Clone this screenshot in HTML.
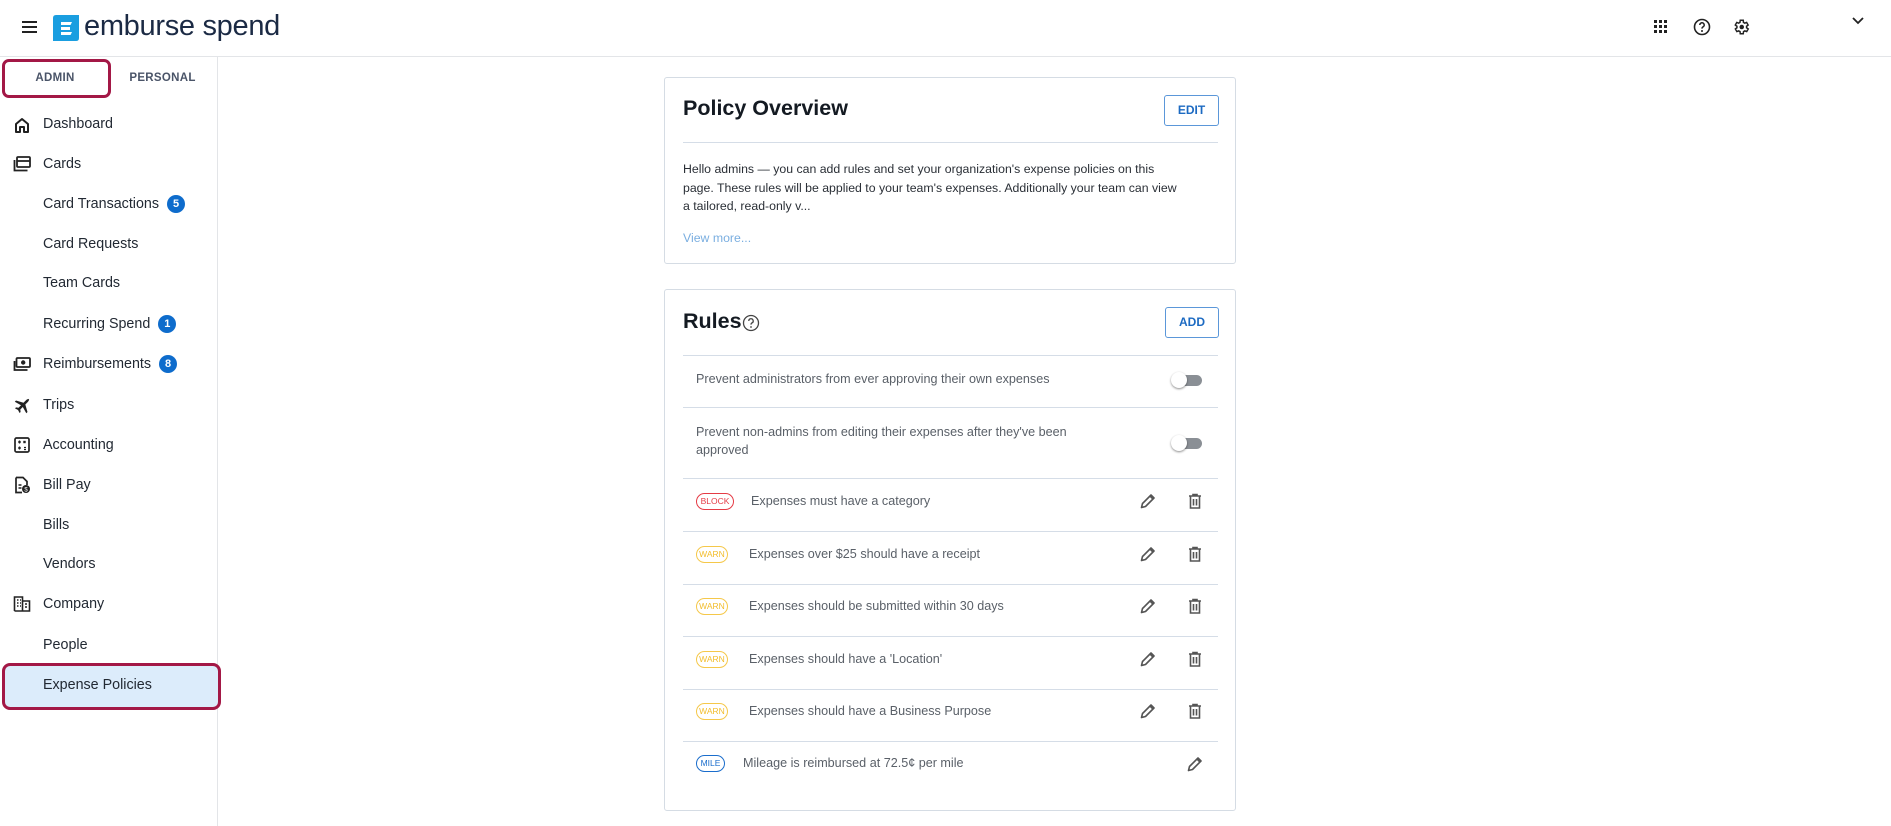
<!DOCTYPE html>
<html><head><meta charset="utf-8"><style>
*{box-sizing:border-box;margin:0;padding:0}
body{width:1891px;height:826px;background:#fff;font-family:"Liberation Sans",sans-serif;position:relative;overflow:hidden;color:#1f2430}
.a{position:absolute}
.hdr{left:0;top:0;width:1891px;height:57px;border-bottom:1px solid #e3e5e8}
.side{left:217px;top:57px;width:1px;height:769px;background:#e3e5e8}
.nav{position:absolute;left:43px;font-size:14.3px;color:#222933;line-height:20px}
.ic{position:absolute;left:13px;width:18px;height:18px}
.badge{display:inline-block;width:18px;height:18px;border-radius:50%;background:#0e6ccc;color:#fff;font-size:11px;font-weight:bold;text-align:center;line-height:18px;margin-left:8px;vertical-align:1px}
.card{position:absolute;left:664px;width:572px;border:1px solid #d5dce4;border-radius:3px;background:#fff}
.btn{position:absolute;border:1px solid #5b97d9;border-radius:3px;color:#1c6ac2;font-size:12px;font-weight:bold;text-align:center;line-height:28px}
.hr{position:absolute;left:18px;width:535px;height:1px;background:#d5dde7}
.rt{position:absolute;font-size:12.6px;color:#5a6068}
.tag{position:absolute;left:31px;height:17px;border:1px solid;border-radius:9px;font-size:8.5px;text-align:center;line-height:15px}
.tog{position:absolute;left:506px;width:32px;height:14px}
.tog:before{content:"";position:absolute;left:4px;top:2px;width:27px;height:11px;border-radius:6px;background:#8a8f95}
.tog:after{content:"";position:absolute;left:0;top:-1px;width:16px;height:16px;border-radius:50%;background:#fff;box-shadow:0 1px 2px rgba(0,0,0,.45)}
</style></head><body>
<div class="a hdr"></div>
<svg class="a" style="left:22px;top:20px" width="16" height="14" viewBox="0 0 16 14"><rect y="1" width="15" height="2" fill="#222"/><rect y="6" width="15" height="2" fill="#222"/><rect y="11" width="15" height="2" fill="#222"/></svg>
<svg class="a" style="left:53px;top:15px" width="26" height="26" viewBox="0 0 26 26"><path d="M3 0H26V23Q26 26 23 26H0V3Q0 0 3 0Z" fill="#1a9ee0"/><path d="M8 7H19L17.5 10H8ZM8 12H17V15H8ZM8 17H19L17.5 20H8Z" fill="#fff"/></svg>
<div class="a" style="left:84px;top:8px;font-size:29px;color:#1b2a44;letter-spacing:-0.3px;line-height:36px">emburse spend</div>
<svg class="a" style="left:1654px;top:20px" width="14" height="14" viewBox="0 0 14 14" fill="#222"><rect x="0" y="0" width="3" height="3"/><rect x="5" y="0" width="3" height="3"/><rect x="10" y="0" width="3" height="3"/><rect x="0" y="5" width="3" height="3"/><rect x="5" y="5" width="3" height="3"/><rect x="10" y="5" width="3" height="3"/><rect x="0" y="10" width="3" height="3"/><rect x="5" y="10" width="3" height="3"/><rect x="10" y="10" width="3" height="3"/></svg>
<svg class="a" style="left:1693px;top:18px" width="18" height="18" viewBox="0 0 18 18"><circle cx="9" cy="9" r="7.5" fill="none" stroke="#222" stroke-width="1.6"/><path d="M6.8 7a2.2 2.2 0 1 1 3 2c-.8.4-.8.9-.8 1.6" fill="none" stroke="#222" stroke-width="1.5"/><circle cx="9" cy="13" r="1" fill="#222"/></svg>
<svg class="a" style="left:1732px;top:18px" width="18" height="18" viewBox="0 0 24 24"><path d="M19.4 13a7.5 7.5 0 0 0 0-2l2.1-1.6-2-3.5-2.5 1a7 7 0 0 0-1.7-1L15 3h-4l-.4 2.9a7 7 0 0 0-1.7 1l-2.5-1-2 3.5L6.6 11a7.5 7.5 0 0 0 0 2l-2.1 1.6 2 3.5 2.5-1a7 7 0 0 0 1.7 1L11 21h4l.4-2.9a7 7 0 0 0 1.7-1l2.5 1 2-3.5z" fill="none" stroke="#222" stroke-width="2"/><circle cx="13" cy="12" r="3" fill="#222"/></svg>
<svg class="a" style="left:1852px;top:17px" width="12" height="8" viewBox="0 0 12 8"><path d="M1 1l5 5 5-5" fill="none" stroke="#222" stroke-width="1.8"/></svg>

<div class="a side"></div>
<div class="a" style="left:2px;top:59px;width:109px;height:39px;border:3px solid #a31846;border-radius:7px"></div>
<div class="a" style="left:0;top:72px;width:110px;text-align:center;font-size:11.5px;font-weight:bold;color:#4a5468;letter-spacing:.3px">ADMIN</div>
<div class="a" style="left:110px;top:72px;width:105px;text-align:center;font-size:11.5px;font-weight:bold;color:#4a5468;letter-spacing:.3px">PERSONAL</div>

<div class="a" style="left:2px;top:663px;width:219px;height:47px;background:#dcecfb;border:3px solid #a31846;border-radius:8px"></div>

<svg class="ic" style="top:116px" viewBox="0 0 18 18"><path d="M3 16V8l6-5 6 5v8h-4v-5H7v5z" fill="none" stroke="#222" stroke-width="2" stroke-linejoin="round"/></svg>
<div class="nav" style="top:114px">Dashboard</div>
<svg class="ic" style="top:155px" viewBox="0 0 18 18"><rect x="4" y="2" width="13" height="10" rx="1" fill="none" stroke="#222" stroke-width="1.8"/><path d="M4 6h13" stroke="#222" stroke-width="1.8"/><path d="M1.5 5v10.5h13" fill="none" stroke="#222" stroke-width="1.8"/></svg>
<div class="nav" style="top:154px">Cards</div>
<div class="nav" style="top:194px">Card Transactions<span class="badge">5</span></div>
<div class="nav" style="top:234px">Card Requests</div>
<div class="nav" style="top:273px">Team Cards</div>
<div class="nav" style="top:314px">Recurring Spend<span class="badge">1</span></div>
<svg class="ic" style="top:355px" viewBox="0 0 18 18"><rect x="3.5" y="3" width="13.5" height="9" rx="1" fill="none" stroke="#222" stroke-width="1.8"/><circle cx="10.2" cy="7.5" r="2.2" fill="#222"/><path d="M1.5 6v9h13" fill="none" stroke="#222" stroke-width="1.8"/></svg>
<div class="nav" style="top:354px">Reimbursements<span class="badge">8</span></div>
<svg class="ic" style="top:396px" viewBox="0 0 18 18"><path d="M16.5 3.5c-1-1-2.5-.3-3.5.7L10.5 6.7 3 4.5 1.8 5.7 8 9.2 5.5 11.7 3 11.4 2 12.4l3 1.6 1.6 3 1-1-.3-2.5 2.5-2.5 3.5 6.2 1.2-1.2-2.2-7.5 2.5-2.5c1-1 1.7-2.5.7-3.5z" fill="#222"/></svg>
<div class="nav" style="top:395px">Trips</div>
<svg class="ic" style="top:436px" viewBox="0 0 18 18"><rect x="2" y="2" width="14" height="14" rx="1.5" fill="none" stroke="#222" stroke-width="1.7"/><path d="M5 6h3M6.5 4.5v3M10.5 5l2 2M12.5 5l-2 2M5 12h3M6.5 10.5v3M11 11.5h2M11 13.5h2" stroke="#222" stroke-width="1.3"/></svg>
<div class="nav" style="top:435px">Accounting</div>
<svg class="ic" style="top:476px" viewBox="0 0 18 18"><path d="M3 1.5h7l4 4V9M3 1.5v15h6" fill="none" stroke="#222" stroke-width="1.7"/><path d="M5.5 9h3M5.5 12h3" stroke="#222" stroke-width="1.5"/><circle cx="13" cy="13" r="4" fill="#222"/><text x="13" y="15.5" font-size="6" fill="#fff" text-anchor="middle" font-family="Liberation Sans">$</text></svg>
<div class="nav" style="top:475px">Bill Pay</div>
<div class="nav" style="top:515px">Bills</div>
<div class="nav" style="top:554px">Vendors</div>
<svg class="ic" style="top:595px" viewBox="0 0 18 18"><path d="M1.5 16V2h8v14M9.5 6h7v10h-15" fill="none" stroke="#222" stroke-width="1.6"/><path d="M4 5h1.5M7 5h1M4 8h1.5M7 8h1M4 11h1.5M7 11h1M12 9h2M12 12h2" stroke="#222" stroke-width="1.6"/></svg>
<div class="nav" style="top:594px">Company</div>
<div class="nav" style="top:635px">People</div>
<div class="nav" style="top:675px">Expense Policies</div>

<!-- Card 1 -->
<div class="card" style="top:77px;height:187px">
  <div class="a" style="left:18px;top:18px;font-size:21.5px;font-weight:bold;color:#141a22">Policy Overview</div>
  <div class="btn" style="left:499px;top:17px;width:55px;height:31px">EDIT</div>
  <div class="hr" style="top:64px"></div>
  <div class="a" style="left:18px;top:82px;width:500px;font-size:12.3px;line-height:18.5px;color:#2a2f36">Hello admins — you can add rules and set your organization's expense policies on this page. These rules will be applied to your team's expenses. Additionally your team can view a tailored, read-only v...</div>
  <div class="a" style="left:18px;top:153px;font-size:12.3px;color:#7aaee0">View more...</div>
</div>

<!-- Card 2 -->
<div class="card" style="top:289px;height:522px">
  <div class="a" style="left:18px;top:19px;font-size:21.5px;font-weight:bold;color:#141a22">Rules</div>
  <svg class="a" style="left:77px;top:24px" width="18" height="18" viewBox="0 0 18 18"><circle cx="9" cy="9" r="7.5" fill="none" stroke="#444" stroke-width="1.3"/><path d="M6.8 7a2.2 2.2 0 1 1 3 2c-.8.4-.8.9-.8 1.6" fill="none" stroke="#444" stroke-width="1.3"/><circle cx="9" cy="13" r=".9" fill="#444"/></svg>
  <div class="btn" style="left:500px;top:17px;width:54px;height:31px">ADD</div>
  <div class="hr" style="top:65px"></div>
  <div class="rt" style="left:31px;top:82px">Prevent administrators from ever approving their own expenses</div>
  <div class="tog" style="top:83px"></div>
  <div class="hr" style="top:117px"></div>
  <div class="rt" style="left:31px;top:133px;line-height:18px;width:400px">Prevent non-admins from editing their expenses after they've been approved</div>
  <div class="tog" style="top:146px"></div>
  <div class="hr" style="top:188px"></div>

  <div class="tag" style="top:203px;width:38px;color:#e53b45;border-color:#e53b45">BLOCK</div>
  <div class="rt" style="left:86px;top:204px">Expenses must have a category</div>
  <div class="hr" style="top:241px"></div>
  <div class="tag" style="top:256px;width:32px;color:#f2bd2c;border-color:#f5c84a">WARN</div>
  <div class="rt" style="left:84px;top:257px">Expenses over $25 should have a receipt</div>
  <div class="hr" style="top:294px"></div>
  <div class="tag" style="top:308px;width:32px;color:#f2bd2c;border-color:#f5c84a">WARN</div>
  <div class="rt" style="left:84px;top:309px">Expenses should be submitted within 30 days</div>
  <div class="hr" style="top:346px"></div>
  <div class="tag" style="top:361px;width:32px;color:#f2bd2c;border-color:#f5c84a">WARN</div>
  <div class="rt" style="left:84px;top:362px">Expenses should have a 'Location'</div>
  <div class="hr" style="top:399px"></div>
  <div class="tag" style="top:413px;width:32px;color:#f2bd2c;border-color:#f5c84a">WARN</div>
  <div class="rt" style="left:84px;top:414px">Expenses should have a Business Purpose</div>
  <div class="hr" style="top:451px"></div>
  <div class="tag" style="top:465px;width:29px;color:#1a6dcc;border-color:#1a6dcc">MILE</div>
  <div class="rt" style="left:78px;top:466px">Mileage is reimbursed at 72.5¢ per mile</div>
</div>

<svg width="0" height="0" style="position:absolute"><defs>
<g id="pen"><path d="M2.5 15.5l1-4L12 3l3 3-8.5 8.5z" fill="none" stroke="#555" stroke-width="1.6" stroke-linejoin="round"/><path d="M11 4l3 3" stroke="#555" stroke-width="1.6"/></g>
<g id="bin"><path d="M3 4h12M7 4V2.5h4V4M4.5 4.5v11.5h9V4.5" fill="none" stroke="#555" stroke-width="1.6"/><path d="M7.5 7v6.5M10.5 7v6.5" stroke="#555" stroke-width="1.6"/></g>
</defs></svg>
<svg class="a" style="left:1139px;top:492px" width="18" height="18"><use href="#pen"/></svg>
<svg class="a" style="left:1186px;top:492px" width="18" height="18"><use href="#bin"/></svg>
<svg class="a" style="left:1139px;top:545px" width="18" height="18"><use href="#pen"/></svg>
<svg class="a" style="left:1186px;top:545px" width="18" height="18"><use href="#bin"/></svg>
<svg class="a" style="left:1139px;top:597px" width="18" height="18"><use href="#pen"/></svg>
<svg class="a" style="left:1186px;top:597px" width="18" height="18"><use href="#bin"/></svg>
<svg class="a" style="left:1139px;top:650px" width="18" height="18"><use href="#pen"/></svg>
<svg class="a" style="left:1186px;top:650px" width="18" height="18"><use href="#bin"/></svg>
<svg class="a" style="left:1139px;top:702px" width="18" height="18"><use href="#pen"/></svg>
<svg class="a" style="left:1186px;top:702px" width="18" height="18"><use href="#bin"/></svg>
<svg class="a" style="left:1186px;top:755px" width="18" height="18"><use href="#pen"/></svg>
</body></html>
